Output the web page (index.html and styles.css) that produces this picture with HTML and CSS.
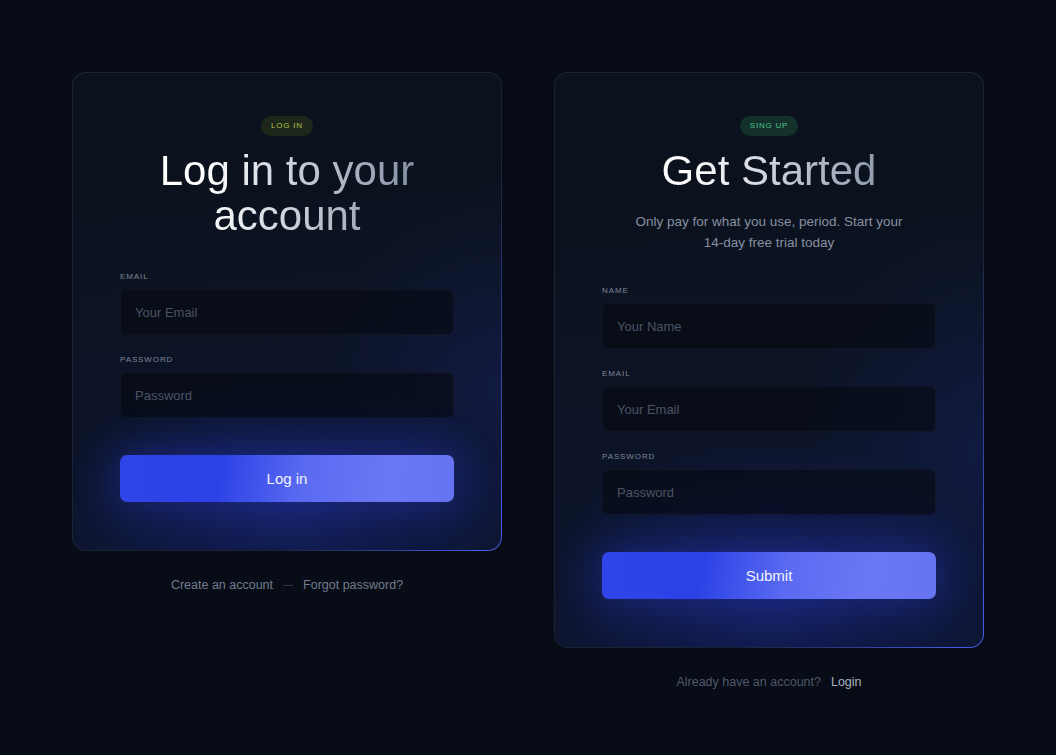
FILE: index.html
```html
<!DOCTYPE html>
<html lang="en">
<head>
    <meta charset="UTF-8">
    <meta name="viewport" content="width=device-width, initial-scale=1.0">
    <title>Log in / Sign up</title>
    <link rel="stylesheet" href="styles.css">
</head>
<body>
    <div class="page">
        <!-- Log in -->
        <div class="panel">
            <div class="card">
                <div class="card-head">
                    <span class="badge badge-login">LOG IN</span>
                    <h1 class="title">Log in to your account</h1>
                </div>
                <form class="form">
                    <div class="field">
                        <label class="label">EMAIL</label>
                        <input class="input" type="text" placeholder="Your Email">
                    </div>
                    <div class="field">
                        <label class="label">PASSWORD</label>
                        <input class="input" type="password" placeholder="Password">
                    </div>
                    <button class="btn" type="button">Log in</button>
                </form>
            </div>
            <div class="links">
                <span>Create an account</span>
                <span class="dash">—</span>
                <span>Forgot password?</span>
            </div>
        </div>

        <!-- Sign up -->
        <div class="panel">
            <div class="card">
                <div class="card-head">
                    <span class="badge badge-signup">SING UP</span>
                    <h1 class="title">Get Started</h1>
                    <p class="subtitle">Only pay for what you use, period. Start your<br>14-day free trial today</p>
                </div>
                <form class="form">
                    <div class="field">
                        <label class="label">NAME</label>
                        <input class="input" type="text" placeholder="Your Name">
                    </div>
                    <div class="field">
                        <label class="label">EMAIL</label>
                        <input class="input" type="text" placeholder="Your Email">
                    </div>
                    <div class="field">
                        <label class="label">PASSWORD</label>
                        <input class="input" type="password" placeholder="Password">
                    </div>
                    <button class="btn" type="button">Submit</button>
                </form>
            </div>
            <div class="links">
                <span class="muted">Already have an account?</span>
                <span class="strong">Login</span>
            </div>
        </div>
    </div>
</body>
</html>
```

FILE: styles.css
```css
body {
    margin: 0;
    background: #070c16;
    font-family: "Liberation Sans", Arial, sans-serif;
    color: #fff;
}
.page {
    display: flex;
    justify-content: center;
    align-items: flex-start;
    gap: 52px;
    padding-top: 72px;
}
.panel {
    width: 430px;
}

/* Card */
.card {
    box-sizing: border-box;
    width: 430px;
    padding: 41px 47px 48px;
    border: 1px solid transparent;
    border-radius: 14px;
    background:
        radial-gradient(ellipse 75% 38% at 50% 90%, rgba(38, 58, 210, 0.32), transparent 70%) padding-box,
        radial-gradient(ellipse 60% 55% at 100% 65%, rgba(40, 60, 190, 0.16), transparent 70%) padding-box,
        linear-gradient(175deg, #0b121d 20%, #0d1530 100%) padding-box,
        linear-gradient(120deg, #1b2333 68%, #4559e2 96%) border-box;
}
.card-head {
    text-align: center;
}
.badge {
    display: inline-block;
    height: 20px;
    line-height: 20px;
    padding: 0 10px;
    border-radius: 10px;
    font-size: 8px;
    letter-spacing: 0.8px;
}
.badge-login {
    background: #1c2619;
    color: #b3c54c;
}
.badge-signup {
    background: #13302a;
    color: #4cc38e;
}
.title {
    margin: 12px 0 0;
    font-size: 42px;
    line-height: 45px;
    font-weight: 400;
    background: linear-gradient(90deg, #ffffff 25%, #7c8aa0 92%);
    -webkit-background-clip: text;
    background-clip: text;
    color: transparent;
}
.subtitle {
    margin: 18px 0 -1px;
    font-size: 13.5px;
    line-height: 21px;
    color: #878fa0;
}

/* Form */
.form {
    display: flex;
    flex-direction: column;
    gap: 20px;
    margin-top: 34px;
}
.field {
    display: flex;
    flex-direction: column;
    gap: 7px;
}
.label {
    font-size: 8px;
    line-height: 10px;
    letter-spacing: 0.9px;
    color: #7e8798;
}
.input {
    box-sizing: border-box;
    height: 46px;
    padding: 0 14px;
    border: 1px solid rgba(255, 255, 255, 0.04);
    border-radius: 6px;
    background: rgba(6, 10, 18, 0.62);
    font-family: inherit;
    font-size: 13px;
    color: #c9d0da;
    outline: none;
}
.input::placeholder {
    color: #4b5465;
}
.btn {
    margin-top: 17px;
    height: 47px;
    border: none;
    border-radius: 7px;
    background: linear-gradient(100deg, #2f45e8 0%, #2c42e6 30%, #5a6af1 55%, #6b78f4 80%, #6673f2 100%);
    box-shadow: 0 0 40px 6px rgba(45, 66, 230, 0.32);
    font-family: inherit;
    font-size: 15px;
    color: #f2f4ff;
    cursor: pointer;
}

/* Links under the cards */
.links {
    display: flex;
    justify-content: center;
    gap: 10px;
    margin-top: 26px;
    font-size: 12.5px;
    line-height: 16px;
    color: #737d8e;
}
.links .dash {
    color: #3a4252;
    font-size: 10px;
}
.links .muted {
    color: #4f5869;
}
.links .strong {
    color: #a9b2c0;
}
```
